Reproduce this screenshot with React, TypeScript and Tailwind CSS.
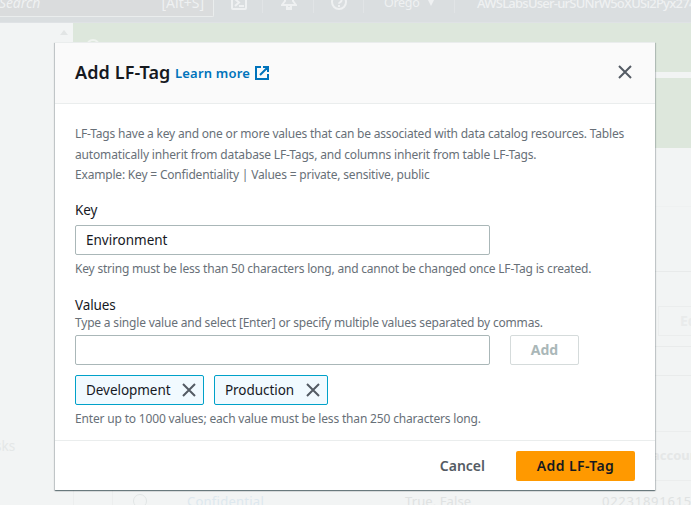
import type { ReactNode } from "react";

function CloseIcon({ className }: { className: string }) {
  return (
    <svg viewBox="0 0 14 14" fill="none" stroke="currentColor" strokeWidth="2" className={className}>
      <path d="M1 1l12 12M13 1L1 13" />
    </svg>
  );
}

function ExternalIcon() {
  return (
    <svg viewBox="0 0 14 14" fill="none" stroke="currentColor" strokeWidth="2" className="h-3.5 w-3.5">
      <path d="M6 1H1v12h12V8M8 1h5v5M13 1L5 9" />
    </svg>
  );
}

function Chip({ children, className }: { children: ReactNode; className: string }) {
  return (
    <div className={`flex h-[30px] items-center justify-between rounded-[2px] border border-[#00a1c9] bg-[#f1faff] pl-[10px] pr-[7px] text-[13.5px] tracking-[-0.05px] text-[#16191f] ${className}`}>
      <span className="pt-[2px]">{children}</span>
      <CloseIcon className="h-[14px] w-[14px] text-[#545b64]" />
    </div>
  );
}

function TopBar() {
  return (
    <header className="flex h-[23px] shrink-0 items-start overflow-hidden border-b border-[#dfe2e5] bg-[#dadee0] text-[#eff1f2]">
      <div className="flex h-[17px] w-[214px] shrink-0 items-start justify-between rounded-br-[2px] border-b border-r border-[#eaeded] bg-[#dadcdd] pr-[9px] leading-[6px]">
        <span className="-ml-px text-[14px] leading-[5px] tracking-[-0.1px] italic">Search</span>
        <span className="text-[14px]">[Alt+S]</span>
      </div>
      <div className="flex h-[13px] w-[49px] shrink-0 border-r border-[#e1e4e6] pl-[17px]">
        <svg viewBox="0 0 16 16" className="-mt-[6px] h-4 w-4" fill="none" stroke="currentColor" strokeWidth="2">
          <rect x="1" y="1" width="14" height="14" rx="1" />
          <path d="M4 5l4 3.5L4 12M8 12h5" />
        </svg>
      </div>
      <div className="flex h-[13px] w-[51px] shrink-0 border-r border-[#e1e4e6] pl-[18px]">
        <svg viewBox="0 0 16 18" className="-mt-[8px] h-[18px] w-4" fill="none" stroke="currentColor" strokeWidth="2">
          <path d="M4 9V6a4 4 0 0 1 8 0v3l3 4H1zM6 14a2 2 0 0 0 4 0v3H6z" />
        </svg>
      </div>
      <div className="flex h-[13px] w-[50px] shrink-0 border-r border-[#e1e4e6] pl-[17px]">
        <svg viewBox="0 0 16 16" className="-mt-[6px] h-4 w-4" fill="none" stroke="currentColor" strokeWidth="2">
          <circle cx="8" cy="8" r="7" />
          <path d="M5.5 6a2.5 2.5 0 1 1 3.5 2.3c-.7.3-1 .7-1 1.5M8 11v2" />
        </svg>
      </div>
      <div className="flex h-[13px] w-[91px] shrink-0 items-start border-r border-[#e1e4e6] pl-[20px] text-[12.5px] leading-[5px]">
        <span className="w-[43px] tracking-[-0.3px]">Orego</span>
        <svg viewBox="0 0 8 8" className="-mt-[2px] h-2 w-2" fill="currentColor"><path d="M0 0h8L4 8z" /></svg>
      </div>
      <span className="pl-[22px] text-[13px] leading-[6px] font-medium tracking-[-0.75px] whitespace-nowrap">AWSLabsUser-urSUNrW5oXUSi2Pyx274</span>
    </header>
  );
}

function Backdrop() {
  return (
    <div className="flex h-[505px] w-[691px] flex-col">
      <TopBar />
      <div className="flex h-[482px]">
        <aside className="flex w-[73px] shrink-0 flex-col justify-between">
          <div className="flex justify-end pr-[5px] pt-[7px]">
            <svg viewBox="0 0 8 5" className="h-[5px] w-2" fill="#e2e5e5"><path d="M4 0l4 5H0z" /></svg>
          </div>
          <span className="mb-[47px] -ml-[5px] text-[13.5px] leading-6 text-[#e4e7e7]">sks</span>
        </aside>
        <main className="flex min-w-0 flex-1 flex-col">
          <div className="h-[49px] shrink-0 bg-[#dde7dc] pl-[13px] pt-[16px]">
            <svg viewBox="0 0 14 14" className="h-[14px] w-[14px]" fill="none" stroke="#eff3ef" strokeWidth="2"><circle cx="7" cy="7" r="6" /></svg>
          </div>
          <div className="h-[6px] shrink-0" />
          <div className="h-[70px] shrink-0 bg-[#dde7dc]" />
          <div className="h-[59px] shrink-0 border-b border-[#eff1f1]" />
          <div className="h-[65px] shrink-0 border-b border-[#e8eaea]" />
          <div className="flex h-[75px] shrink-0 items-end justify-end border-b border-[#e9ebeb] pb-[10px]">
            <div className="h-[30px] w-[33px] overflow-hidden border-y border-l border-[#ebeded] pl-[21px] text-[14px] leading-7 font-bold text-[#e9ebeb]">Ed</div>
          </div>
          <div className="h-[29px] shrink-0 border-b border-[#e9ebeb]" />
          <div className="h-[56px] shrink-0 border-b border-[#ebeded]" />
          <div className="flex h-[49px] shrink-0 items-center justify-end overflow-hidden border-b border-[#ebeded] text-[13px] font-bold text-[#e5e7e7]"><span className="w-[39px]">accoun</span></div>
          <div className="flex flex-1 overflow-hidden text-[13px] leading-[41px] text-[#dfe2e2]">
            <div className="w-[40px] shrink-0 border-x border-[#eceeee]" />
            <div className="w-[74px] shrink-0 pl-[20px] pt-[13px]">
              <svg viewBox="0 0 14 14" className="h-[14px] w-[14px]" fill="none" stroke="#e1e5e5"><circle cx="7" cy="7" r="6.5" /></svg>
            </div>
            <span className="w-[218px] shrink-0 tracking-[0.25px] text-[#dde8ef]">Confidential</span>
            <span className="w-[197px] shrink-0 tracking-[0.1px]">True, False</span>
            <span className="tracking-[0.75px]">02231891615</span>
          </div>
        </main>
      </div>
    </div>
  );
}

export default function App() {
  return (
    <div className="relative h-[505px] w-[691px] overflow-hidden bg-[#f2f4f4] font-['Noto_Sans',sans-serif]">
      <Backdrop />
      <div role="dialog" className="absolute left-[55px] top-[42px] flex h-[448px] w-[600px] flex-col border-t border-[#eaeded] bg-white text-[13.5px] text-[#16191f] shadow-[0_1px_1px_0_rgba(0,28,36,0.4),1px_1px_1px_0_rgba(0,28,36,0.15),-1px_1px_1px_0_rgba(0,28,36,0.15)]">
        <header className="flex h-[61px] shrink-0 items-center border-b border-[#eaeded] bg-[#fafafa] px-5 pb-[2px]">
          <h2 className="-mt-px w-[100px] text-[18px] leading-6 font-semibold tracking-[0.1px] whitespace-nowrap">Add LF-Tag</h2>
          <a className="mt-[2px] w-[80px] text-[13px] leading-6 font-semibold tracking-[0.2px] whitespace-nowrap text-[#0073bb]">Learn more</a>
          <span className="mt-[2px] text-[#0073bb]"><ExternalIcon /></span>
          <CloseIcon className="mr-[3px] ml-auto h-[14px] w-[14px] text-[#545b64]" />
        </header>
        <div className="flex h-[336px] shrink-0 flex-col px-5 pt-[20px] text-[#16191f]">
          <div className="text-[12px] leading-[20.5px] whitespace-nowrap text-[#687078]">
            <p><span className="tracking-[-0.2px]">LF-Tags have a key and one or more values that can be associated with data catalog resources. Tables</span></p>
            <p><span className="tracking-[-0.16px]">automatically inherit from database LF-Tags, and columns inherit from table LF-Tags.</span></p>
            <p><span className="tracking-[-0.19px]">Example: Key = Confidentiality | Values = private, sensitive, public</span></p>
          </div>
          <label className="mt-[13px] h-[26px] leading-[22px]"><span className="tracking-[-0.1px]">Key</span></label>
          <div className="flex h-[30px] w-[415px] shrink-0 items-center rounded-[2px] border border-[#aab7b8] px-[10px]"><span className="pt-[2px]">Environment</span></div>
          <p className="mt-[3px] text-[12px] leading-[22px] whitespace-nowrap text-[#687078]"><span className="tracking-[-0.2px]">Key string must be less than 50 characters long, and cannot be changed once LF-Tag is created.</span></p>
          <label className="mt-[14px] h-[20px] leading-[22px]"><span className="tracking-[-0.1px]">Values</span></label>
          <p className="h-[21px] text-[12px] leading-[18px] whitespace-nowrap text-[#687078]"><span className="tracking-[-0.19px]">Type a single value and select [Enter] or specify multiple values separated by commas.</span></p>
          <div className="flex shrink-0 gap-5">
            <div className="h-[30px] w-[415px] rounded-[2px] border border-[#aab7b8]" />
            <button className="h-[30px] w-[69px] rounded-[2px] border border-[#d5dbdb] text-[14px] font-bold text-[#aab7b8]"><span>Add</span></button>
          </div>
          <div className="mt-[10px] flex shrink-0 gap-[10px]">
            <Chip className="w-[129px]">Development</Chip>
            <Chip className="w-[114px]">Production</Chip>
          </div>
          <p className="mt-[3px] text-[12px] leading-[22px] whitespace-nowrap text-[#687078]"><span className="tracking-[-0.17px]">Enter up to 1000 values; each value must be less than 250 characters long.</span></p>
        </div>
        <footer className="flex flex-1 items-center justify-end gap-[31px] border-t border-[#eaeded] px-5 text-[14px] font-semibold">
          <button className="text-[#545b64]"><span>Cancel</span></button>
          <button className="h-[30px] w-[119px] rounded-[2px] bg-[#ff9900] text-[#16191f]"><span className="tracking-[0.4px]">Add LF-Tag</span></button>
        </footer>
      </div>
    </div>
  );
}
